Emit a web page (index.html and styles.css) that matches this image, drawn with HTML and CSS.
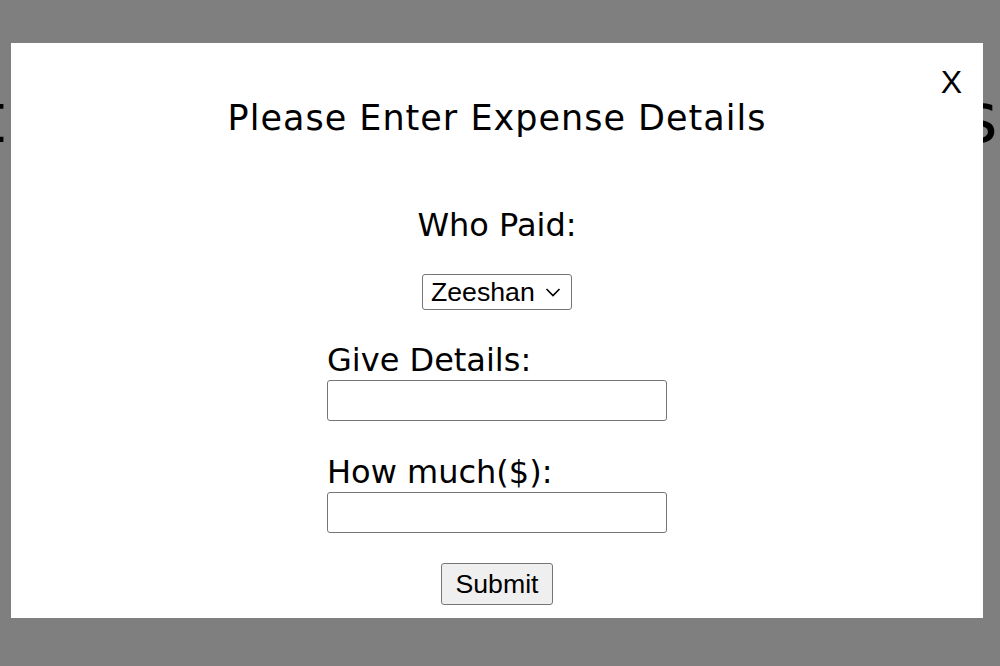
FILE: index.html
```html
<!DOCTYPE html>
<html>
<head>
<meta charset="utf-8">
<link rel="stylesheet" href="styles.css">
</head>
<body>
<div class="page">
  <h1 class="page-title">Split Shared Group Trip Expenses</h1>
</div>
<div class="overlay">
  <div class="modal">
    <span class="close">X</span>
    <h2 class="modal-title">Please Enter Expense Details</h2>
    <form class="form">
      <label class="who-label">Who Paid:</label>
      <div class="select-wrap">
        <select class="payer">
          <option>Zeeshan</option>
        </select>
        <svg class="chevron" width="16" height="9" viewBox="0 0 16 9"><path d="M1.5 1 L8 7.5 L14.5 1" fill="none" stroke="#000" stroke-width="1.6"/></svg>
      </div>
      <div class="field first">
        <label class="field-label">Give Details:</label>
        <input type="text" class="text-input">
      </div>
      <div class="field second">
        <label class="field-label">How much($):</label>
        <input type="text" class="text-input">
      </div>
      <button type="button" class="submit">Submit</button>
    </form>
  </div>
</div>
</body>
</html>
```

FILE: styles.css
```css
* { box-sizing: border-box; }
html, body { margin: 0; padding: 0; }
body {
  width: 1000px;
  height: 666px;
  overflow: hidden;
  background: #fff;
  font-family: "DejaVu Sans", sans-serif;
}
.page {
  padding-top: 84px;
}
.page-title {
  margin: 0 0 0 -148px;
  font-size: 69px;
  font-weight: normal;
  white-space: nowrap;
  line-height: 1;
}
.overlay {
  position: fixed;
  inset: 0;
  background: rgba(0, 0, 0, 0.5);
  padding: 43px 17px 48px 11px;
}
.modal {
  position: relative;
  background: #fff;
  height: 575px;
  display: flex;
  flex-direction: column;
  align-items: center;
}
.close {
  position: absolute;
  top: 23px;
  right: 21px;
  font-family: "Liberation Sans", Arial, sans-serif;
  font-size: 32px;
  line-height: 1;
}
.modal-title {
  margin: 55px 0 0;
  font-size: 35px;
  letter-spacing: 1px;
  font-weight: normal;
  line-height: 40px;
}
.form {
  display: flex;
  flex-direction: column;
  align-items: center;
  margin-top: 68px;
}
.who-label {
  font-size: 32px;
  line-height: 38px;
}
.select-wrap {
  position: relative;
  margin-top: 30px;
}
.payer {
  display: block;
  -webkit-appearance: none;
  appearance: none;
  width: 150px;
  height: 36px;
  font-family: "Liberation Sans", Arial, sans-serif;
  font-size: 26.67px;
  color: #000;
  border: 1px solid #767676;
  border-radius: 3px;
  background: #fff;
  padding: 0 0 0 8px;
}
.chevron {
  position: absolute;
  left: 123px;
  top: 14px;
  pointer-events: none;
}
.field {
  display: flex;
  flex-direction: column;
  width: 340px;
}
.field.first { margin-top: 31px; }
.field.second { margin-top: 32px; }
.field-label {
  font-size: 32px;
  line-height: 38px;
}
.text-input {
  margin-top: 1px;
  height: 41px;
  width: 340px;
  border: 1px solid #767676;
  border-radius: 3px;
  font-size: 24px;
}
.submit {
  margin-top: 30px;
  height: 42px;
  padding: 0 14px;
  font-family: "Liberation Sans", Arial, sans-serif;
  font-size: 26.67px;
  border: 1px solid #767676;
  border-radius: 3px;
  background: #efefef;
  color: #000;
}
```
